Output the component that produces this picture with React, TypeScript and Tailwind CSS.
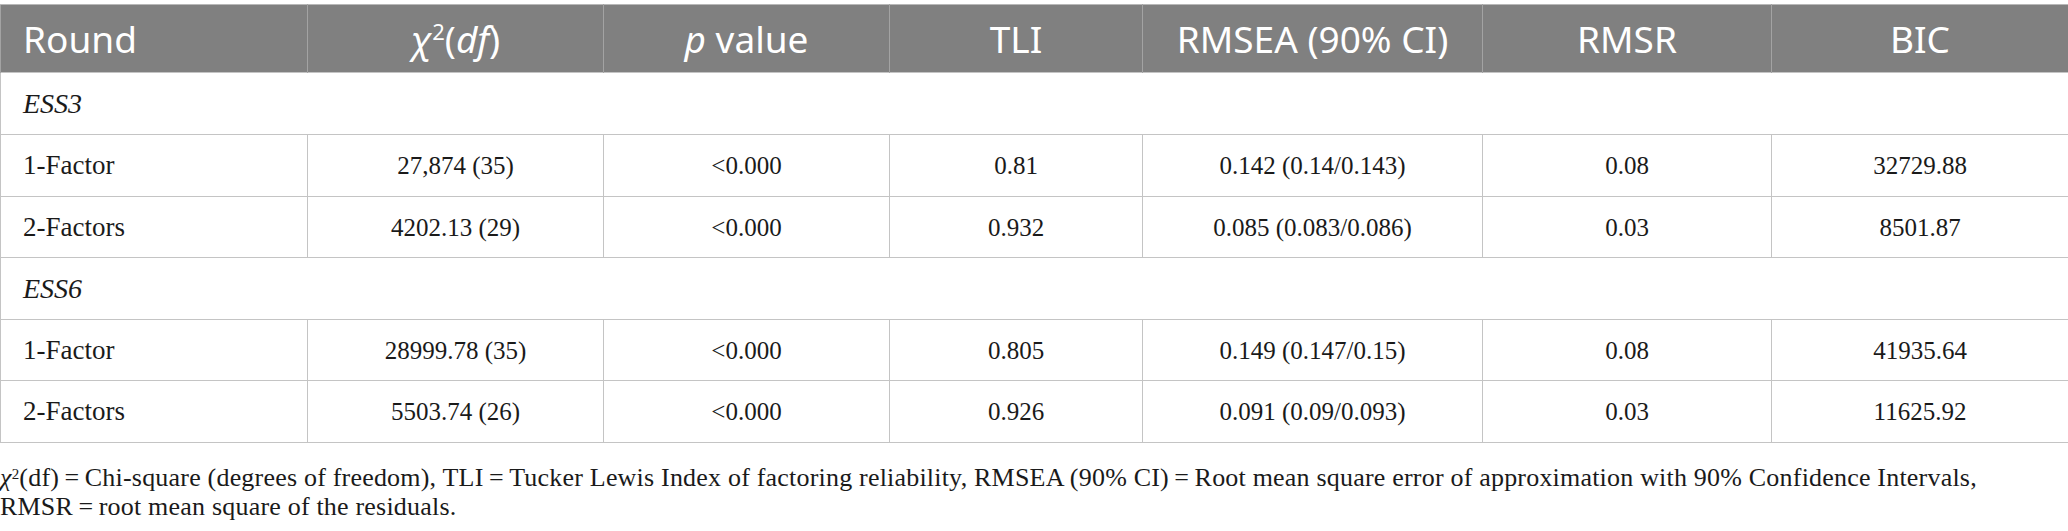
import React from "react";

const widths = [307, 296, 286, 253, 340, 289, 297];

type Row = { kind: "group"; label: string } | { kind: "data"; cells: string[]; h: number };

const rows: Row[] = [
  { kind: "group", label: "ESS3" },
  { kind: "data", cells: ["1-Factor", "27,874 (35)", "<0.000", "0.81", "0.142 (0.14/0.143)", "0.08", "32729.88"], h: 62 },
  { kind: "data", cells: ["2-Factors", "4202.13 (29)", "<0.000", "0.932", "0.085 (0.083/0.086)", "0.03", "8501.87"], h: 61 },
  { kind: "group", label: "ESS6" },
  { kind: "data", cells: ["1-Factor", "28999.78 (35)", "<0.000", "0.805", "0.149 (0.147/0.15)", "0.08", "41935.64"], h: 61 },
  { kind: "data", cells: ["2-Factors", "5503.74 (26)", "<0.000", "0.926", "0.091 (0.09/0.093)", "0.03", "11625.92"], h: 62 },
];

export default function App() {
  const th =
    "h-[68px] bg-[#808080] text-white font-normal text-[37px] leading-none border-l border-r border-[#a3a3a3] border-t border-t-[#b8b8b8] p-0 align-middle";
  return (
    <div className="w-[2068px] h-[531px] bg-white pt-[4px] overflow-hidden">
      <table className="table-fixed border-collapse w-[2068px]">
        <colgroup>
          {widths.map((w, i) => (
            <col key={i} style={{ width: w }} />
          ))}
        </colgroup>
        <thead className="font-['Noto_Sans',sans-serif]">
          <tr>
            <th className={`${th} text-left pl-[22px]`}>Round</th>
            <th className={`${th} text-center`}>
              <span className="italic">χ</span>
              <span className="text-[22px] relative top-[-13px]">2</span>(<span className="italic">df</span>)
            </th>
            <th className={`${th} text-center`}>
              <span className="italic">p</span> value
            </th>
            <th className={`${th} text-center`}>TLI</th>
            <th className={`${th} text-center`}>RMSEA (90% CI)</th>
            <th className={`${th} text-center`}>RMSR</th>
            <th className={`${th} text-center`}>BIC</th>
          </tr>
        </thead>
        <tbody className="font-['Liberation_Serif',serif] text-[25px] text-[#1a1a1a]">
          {rows.map((r, i) =>
            r.kind === "group" ? (
              <tr key={i}>
                <td
                  colSpan={7}
                  className="h-[62px] border border-[#c4c4c4] pl-[22px] italic text-[28px] align-middle leading-none"
                >
                  {r.label}
                </td>
              </tr>
            ) : (
              <tr key={i}>
                {r.cells.map((c, j) => (
                  <td
                    key={j}
                    style={{ height: r.h }}
                    className={`border border-[#c4c4c4] align-middle leading-none ${
                      j === 0 ? "text-left pl-[22px] text-[27px]" : "text-center"
                    }`}
                  >
                    {c}
                  </td>
                ))}
              </tr>
            )
          )}
        </tbody>
      </table>
      <div className="pt-[20px] font-['Liberation_Serif',serif] text-[26px] tracking-[0.2px] leading-[29px] text-[#1a1a1a] whitespace-nowrap">
        <span className="italic">χ</span>
        <sup className="text-[15px]">2</sup>(df)&#8201;=&#8201;Chi-square (degrees of freedom), TLI&#8201;=&#8201;Tucker Lewis
        Index of factoring reliability, RMSEA (90% CI)&#8201;=&#8201;Root mean square error of approximation with 90%
        Confidence Intervals,
        <br />
        RMSR&#8201;=&#8201;root mean square of the residuals.
      </div>
    </div>
  );
}
